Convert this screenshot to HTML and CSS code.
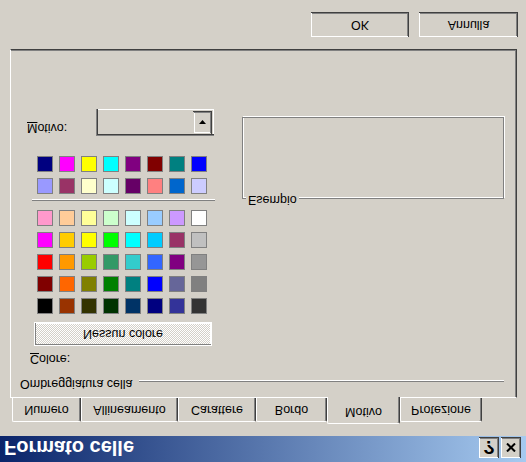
FILE: index.html
```html
<!DOCTYPE html>
<html lang="it">
<head>
<meta charset="utf-8">
<title>Formato celle</title>
<link rel="stylesheet" href="styles.css">
</head>
<body>
<div class="window">
  <div class="titlebar">
    <span class="title">Formato celle</span>
    <div class="caption-buttons">
      <button class="cap-btn help">?</button>
      <button class="cap-btn close"><svg width="10" height="9" viewBox="0 0 10 9"><path d="M1 0.5 L9 8.5 M9 0.5 L1 8.5" stroke="#000" stroke-width="2" fill="none"/></svg></button>
    </div>
  </div>

  <div class="tabs">
    <div class="tab t-num">Numero</div>
    <div class="tab t-all">Allineamento</div>
    <div class="tab t-car">Carattere</div>
    <div class="tab t-bor">Bordo</div>
    <div class="tab t-mot active">Motivo</div>
    <div class="tab t-pro">Protezione</div>
  </div>

  <div class="panel">
    <div class="group-header">
      <span class="group-title">Ombreggiatura cella</span>
      <span class="rule"></span>
    </div>
    <div class="columns">
      <div class="pattern-col">
        <div class="colore-label"><u>C</u>olore:</div>
        <button class="none-btn">Nessun colore</button>
        <div class="swatches">
          <span class="sw" style="background:#000000"></span><span class="sw" style="background:#993300"></span><span class="sw" style="background:#333300"></span><span class="sw" style="background:#003300"></span><span class="sw" style="background:#003366"></span><span class="sw" style="background:#000080"></span><span class="sw" style="background:#333399"></span><span class="sw" style="background:#333333"></span>
          <span class="sw" style="background:#800000"></span><span class="sw" style="background:#FF6600"></span><span class="sw" style="background:#808000"></span><span class="sw" style="background:#008000"></span><span class="sw" style="background:#008080"></span><span class="sw" style="background:#0000FF"></span><span class="sw" style="background:#666699"></span><span class="sw" style="background:#808080"></span>
          <span class="sw" style="background:#FF0000"></span><span class="sw" style="background:#FF9900"></span><span class="sw" style="background:#99CC00"></span><span class="sw" style="background:#339966"></span><span class="sw" style="background:#33CCCC"></span><span class="sw" style="background:#3366FF"></span><span class="sw" style="background:#800080"></span><span class="sw" style="background:#969696"></span>
          <span class="sw" style="background:#FF00FF"></span><span class="sw" style="background:#FFCC00"></span><span class="sw" style="background:#FFFF00"></span><span class="sw" style="background:#00FF00"></span><span class="sw" style="background:#00FFFF"></span><span class="sw" style="background:#00CCFF"></span><span class="sw" style="background:#993366"></span><span class="sw" style="background:#C0C0C0"></span>
          <span class="sw" style="background:#FF99CC"></span><span class="sw" style="background:#FFCC99"></span><span class="sw" style="background:#FFFF99"></span><span class="sw" style="background:#CCFFCC"></span><span class="sw" style="background:#CCFFFF"></span><span class="sw" style="background:#99CCFF"></span><span class="sw" style="background:#CC99FF"></span><span class="sw" style="background:#FFFFFF"></span>
        </div>
        <div class="sep"></div>
        <div class="swatches upper">
          <span class="sw" style="background:#9999FF"></span><span class="sw" style="background:#993366"></span><span class="sw" style="background:#FFFFCC"></span><span class="sw" style="background:#CCFFFF"></span><span class="sw" style="background:#660066"></span><span class="sw" style="background:#FF8080"></span><span class="sw" style="background:#0066CC"></span><span class="sw" style="background:#CCCCFF"></span>
          <span class="sw" style="background:#000080"></span><span class="sw" style="background:#FF00FF"></span><span class="sw" style="background:#FFFF00"></span><span class="sw" style="background:#00FFFF"></span><span class="sw" style="background:#800080"></span><span class="sw" style="background:#800000"></span><span class="sw" style="background:#008080"></span><span class="sw" style="background:#0000FF"></span>
        </div>
        <div class="motivo-row">
          <label class="motivo-label"><u>M</u>otivo:</label>
          <div class="combo">
            <span class="combo-btn"><svg width="7" height="4" viewBox="0 0 7 4"><path d="M0 0 H7 L3.5 4 Z" fill="#000"/></svg></span>
          </div>
        </div>
      </div>
      <div class="sample-col">
        <div class="sample"><span class="sample-label">Esempio</span></div>
      </div>
    </div>
  </div>

  <div class="buttons">
    <button class="btn ok">OK</button>
    <button class="btn cancel">Annulla</button>
  </div>
</div>
</body>
</html>
```

FILE: styles.css
```css
* { box-sizing: border-box; }
html, body { margin: 0; padding: 0; }
body {
  width: 526px;
  height: 462px;
  overflow: hidden;
  background: #d4d0c8;
  font-family: "Liberation Sans", Arial, sans-serif;
  font-size: 12.5px;
  line-height: 15px;
  color: #000;
}
.window {
  width: 526px;
  height: 462px;
  background: #d4d0c8;
  display: flex;
  flex-direction: column;
  transform: scaleY(-1);
}

/* title bar */
.titlebar {
  flex: none;
  height: 26px;
  display: flex;
  align-items: flex-start;
  background: linear-gradient(to right, #0a246a, #a6caf0);
  color: #fff;
}
.title {
  flex: 1;
  font-weight: bold;
  font-size: 20px;
  line-height: 26px;
  padding: 1px 0 0 4px;
}
.caption-buttons {
  display: flex;
  gap: 2px;
  margin: 4px 5px 0 0;
}
.cap-btn {
  width: 20px;
  height: 21px;
  padding: 0;
  border: none;
  background: #d4d0c8;
  box-shadow: inset -1px -1px #404040, inset 1px 1px #fff, inset -2px -2px #808080, inset 2px 2px #d4d0c8;
  display: flex;
  align-items: center;
  justify-content: center;
  color: #000;
  font-family: "Liberation Sans", Arial, sans-serif;
  font-weight: bold;
  font-size: 19px;
  line-height: 1;
}

/* tabs */
.tabs {
  flex: none;
  display: flex;
  align-items: flex-end;
  height: 26px;
  margin: 12px 0 0 12px;
  position: relative;
  z-index: 1;
}
.tab {
  height: 24px;
  padding-top: 4px;
  text-align: center;
  background: #d4d0c8;
  border-top: 1px solid #fff;
  border-left: 1px solid #fff;
  border-right: 1px solid #404040;
  box-shadow: inset -1px 0 #808080;
  border-radius: 2px 2px 0 0;
}
.tab.active {
  height: 27px;
  margin-bottom: -1px;
}
.t-num { width: 69px; }
.t-all { width: 97px; }
.t-car { width: 78px; }
.t-bor { width: 71px; }
.t-mot { width: 73px; }
.t-pro { width: 82px; }

/* panel */
.panel {
  flex: none;
  margin-left: 10px;
  width: 507px;
  height: 349px;
  border-top: 1px solid #fff;
  border-left: 1px solid #fff;
  border-right: 1px solid #404040;
  border-bottom: 1px solid #404040;
  box-shadow: inset -1px -1px #808080;
  padding: 6px 0 0 9px;
}
.group-header {
  display: flex;
  height: 15px;
}
.rule {
  flex: 1;
  height: 2px;
  margin: 9px 12px 0 6px;
  border-top: 1px solid #808080;
  border-bottom: 1px solid #fff;
}
.columns {
  display: flex;
  align-items: flex-start;
}
.pattern-col {
  width: 200px;
  display: flex;
  flex-direction: column;
  align-items: flex-start;
}
.colore-label {
  margin: 10px 0 0 10px;
}
.none-btn {
  margin: 5px 0 0 14px;
  width: 178px;
  height: 24px;
  padding: 0;
  border: 1px solid #fff;
  box-shadow: inset 1px 1px #808080, inset -1px -1px #fff;
  background: repeating-conic-gradient(#ffffff 0 25%, #d4d0c8 0 50%) 0 0 / 2px 2px;
  font: inherit;
  color: #000;
}
.swatches {
  margin: 8px 0 0 17px;
  display: grid;
  grid-template-columns: repeat(8, 16px);
  grid-auto-rows: 16px;
  gap: 6px;
}
.swatches.upper {
  margin-top: 5px;
}
.sw {
  display: block;
  border: 1px solid #808080;
}
.sep {
  margin: 9px 0 0 12px;
  width: 183px;
  height: 2px;
  border-top: 1px solid #808080;
  border-bottom: 1px solid #fff;
}
.motivo-row {
  margin-top: 20px;
  display: flex;
  align-items: flex-start;
}
.motivo-label {
  width: 69px;
  margin: 1px 0 0 7px;
}
.combo {
  width: 118px;
  height: 27px;
  padding: 2px;
  display: flex;
  justify-content: flex-end;
  background: #d4d0c8;
  box-shadow: inset 1px 1px #808080, inset 2px 2px #404040, inset -1px -1px #fff, inset -2px -2px #d4d0c8;
}
.combo-btn {
  width: 19px;
  height: 23px;
  display: flex;
  align-items: center;
  justify-content: center;
  background: #d4d0c8;
  box-shadow: inset -1px -1px #404040, inset 1px 1px #d4d0c8, inset -2px -2px #808080, inset 2px 2px #fff;
}
.sample-col {
  margin: 177px 0 0 22px;
}
.sample {
  position: relative;
  width: 262px;
  height: 82px;
  border: 1px solid #808080;
  box-shadow: inset 1px 1px #fff, 1px 1px #fff;
}
.sample-label {
  position: absolute;
  left: 3px;
  top: -9px;
  padding: 0 2px;
  background: #d4d0c8;
}

/* buttons */
.buttons {
  flex: none;
  display: flex;
  justify-content: flex-end;
  gap: 10px;
  margin: 12px 8px 0 0;
}
.btn {
  height: 25px;
  padding: 0;
  border: none;
  background: #d4d0c8;
  box-shadow: inset -1px -1px #404040, inset 1px 1px #fff, inset -2px -2px #808080, inset 2px 2px #d4d0c8;
  font: inherit;
  color: #000;
}
.ok { width: 98px; }
.cancel { width: 99px; }
```
